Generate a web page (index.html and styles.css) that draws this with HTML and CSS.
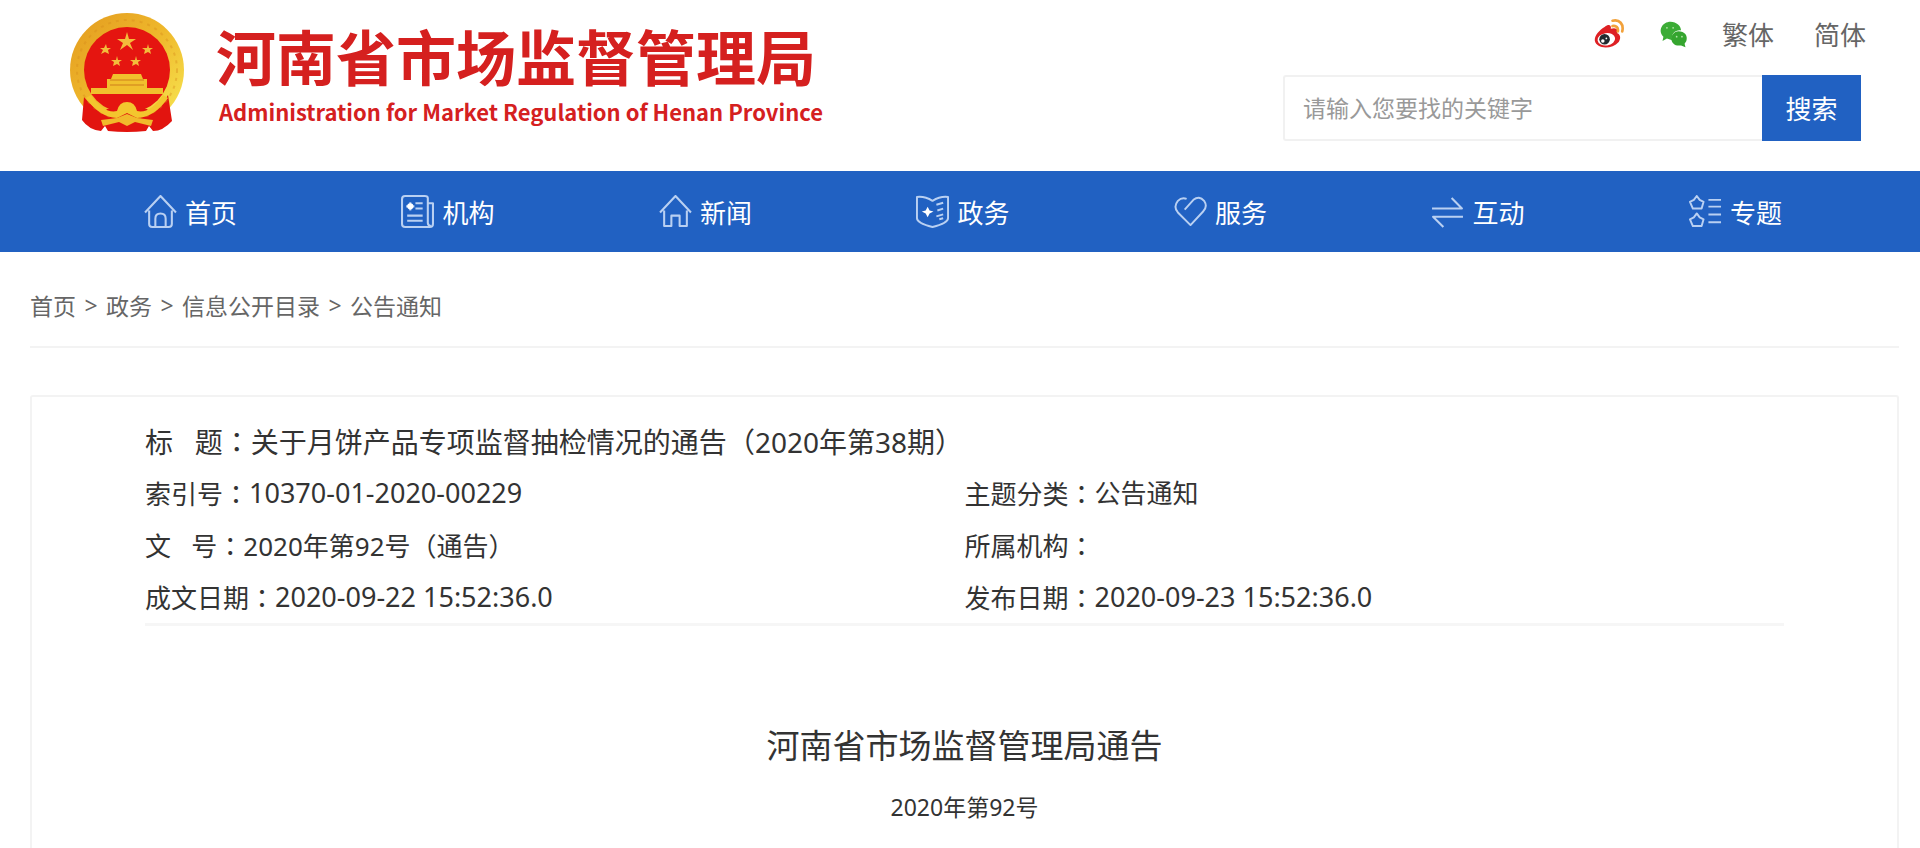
FILE: index.html
```html
<!DOCTYPE html>
<html lang="zh-CN">
<head>
<meta charset="utf-8">
<meta name="viewport" content="width=device-width, initial-scale=1">
<title>河南省市场监督管理局</title>
<link rel="stylesheet" href="styles.css">
</head>
<body>
<header class="header">
  <a class="brand" href="#">
    <svg class="emblem" viewBox="0 0 116 120" aria-hidden="true">
      <defs>
        <linearGradient id="gold" x1="0" y1="0" x2="1" y2="1">
          <stop offset="0" stop-color="#e39a1f"/><stop offset=".5" stop-color="#efb92c"/><stop offset="1" stop-color="#f8ea55"/>
        </linearGradient>
      </defs>
      <circle cx="58" cy="57" r="57" fill="url(#gold)"/>
      <path d="M10 92Q58 130 106 92L120 120H0Z" fill="#fff"/>
      <path d="M15 84Q24 96 35 99L38 96H78L81 99Q92 96 99 82L103 108Q94 118 84 118L80 113 77 118Q58 120 39 118L36 113 32 118Q20 117 13 107Z" fill="#e2140f"/>
      <circle cx="58" cy="57" r="50" fill="none" stroke="#d88d1c" stroke-width="2" stroke-dasharray="3 5" opacity=".4"/>
      <circle cx="58" cy="57" r="43" fill="#e51510"/>
      <path d="M44 61H72L74 66H78V75H94V81H22V75H38V66H42Z" fill="#f1c02d"/>
      <path d="M41 67H75M41 72H75" stroke="#cf7f1c" stroke-width="1"/>
      <path d="M22 82Q35 101 48 98 50 89 58 89T68 98Q81 101 94 82L99 85Q86 104 68 105L58 100 48 105Q30 104 17 85Z" fill="#f3c62e"/>
      <path d="M32 107 48 105 58 101 68 105 84 107 82 113 66 109 58 113 50 109 34 113Z" fill="#f1b92b"/>
      <g fill="#f3bd3b">
        <path d="M58 19 60 26H67L61 30 64 37 58 32 51 37 54 30 48 26H56Z"/>
        <path d="M37 31 38 35H42L39 37 40 41 36 39 32 41 34 37 31 35H35Z"/>
        <path d="M79 31 80 35H84L81 37 82 41 79 39 75 41 76 37 73 35H78Z"/>
        <path d="M48 43 49 47H53L50 49 51 53 48 51 44 53 45 49 42 47H47Z"/>
        <path d="M67 43 68 47H72L69 49 70 53 67 51 63 53 64 49 61 47H66Z"/>
      </g>
    </svg>
    <span class="brand-text">
      <span class="brand-cn">河南省市场监督管理局</span>
      <span class="brand-en" lang="en">Administration for Market Regulation of Henan Province</span>
    </span>
  </a>
  <div class="tools">
    <div class="links">
      <a href="#" aria-label="微博">
        <svg class="social" viewBox="0 0 34 34" aria-hidden="true">
          <path d="M12 9C17 5 20 7 19 11 25 9 28 12 26 16 31 18 30 23 28 26 20 35 3 34 1 25 0 20 5 13 12 9Z" fill="#de2024"/>
          <ellipse cx="14" cy="23" rx="10" ry="7" transform="rotate(-8 14 23)" fill="#fff"/>
          <circle cx="12" cy="23" r="6" fill="#202a2e"/><circle cx="10" cy="25" r="2" fill="#fff"/><circle cx="14" cy="22" r="1" fill="#fff"/>
          <path d="M21 2C29 0 34 6 32 14M21 8C25 7 28 10 27 14" fill="none" stroke="#f2a13a" stroke-width="3" stroke-linecap="round"/>
        </svg>
      </a>
      <a href="#" aria-label="微信">
        <svg class="social" viewBox="0 0 34 34" aria-hidden="true">
          <path d="M13 3C20 3 25 8 25 13 19 12 13 17 15 24L9 22 4 25 5 20C-2 13 4 3 13 3Z" fill="#3cac36"/>
          <path d="M22 14C29 14 33 19 31 25L29 28 30 32 25 30C18 31 14 27 14 22 14 18 18 14 22 14Z" fill="#35a52f"/>
          <g fill="#b4e2a8"><circle cx="9" cy="10" r="1"/><circle cx="16" cy="10" r="1"/><circle cx="20" cy="20" r="1"/><circle cx="26" cy="20" r="1"/></g>
        </svg>
      </a>
      <a class="lang" href="#">繁体</a>
      <a class="lang" href="#">简体</a>
    </div>
    <form class="search">
      <input type="text" aria-label="关键字" placeholder="请输入您要找的关键字">
      <button type="submit">搜索</button>
    </form>
  </div>
</header>

<nav class="nav">
  <a href="#"><svg viewBox="0 0 32 32" aria-hidden="true"><path d="M1 17 16 1 31 17M5 15V28Q5 31 8 31H24Q27 31 27 28V15M11 31V23Q11 18 16 18T21 23V31"/></svg>首页</a>
  <a href="#"><svg viewBox="0 0 32 32" aria-hidden="true"><path d="M26 27V3Q26 1 23 1H4Q1 1 1 4V28Q1 31 4 31H28Q31 31 31 28V8H27M26 27Q26 30 29 30M14 8H21M14 13H21M6 20H21M6 25H21M9 7V15M5 11H13"/><circle class="fill" cx="9" cy="11" r="3"/></svg>机构</a>
  <a href="#"><svg viewBox="0 0 32 32" aria-hidden="true"><path d="M1 17 16 1 31 17M5 15V30H12V20H20V30H27V15"/></svg>新闻</a>
  <a href="#"><svg viewBox="0 0 34 34" aria-hidden="true"><path d="M1 2Q9 1 17 6 25 1 33 2V24Q33 29 17 33 1 29 1 24ZM21 10 28 8M22 16 28 14M21 22 28 20M24 25 28 24"/><path class="fill" d="M12 12 14 16 18 17 14 19 12 23 10 19 6 17 10 16Z"/></svg>政务</a>
  <a href="#"><svg viewBox="0 0 34 34" aria-hidden="true"><path d="M11 15 20 5Q26 0 31 6 35 12 30 17L17 31 4 18Q-1 12 4 6 8 2 13 4"/></svg>服务</a>
  <a href="#"><svg viewBox="0 0 32 32" aria-hidden="true"><path d="M1 13H30L20 3M31 21H2L12 31"/></svg>互动</a>
  <a href="#"><svg viewBox="0 0 34 34" aria-hidden="true"><path d="M8 1 11 5 15 7 13 14H4L1 7 5 5ZM8 19 11 23 15 25 13 32H4L1 25 5 23ZM20 5H33M20 12H33M20 20H33M20 28H33"/></svg>专题</a>
</nav>

<main class="main">
  <nav class="crumbs" aria-label="当前位置">
    <a href="#">首页</a><span>&gt;</span><a href="#">政务</a><span>&gt;</span><a href="#">信息公开目录</a><span>&gt;</span><a href="#">公告通知</a>
  </nav>
  <article class="sheet">
    <dl class="info">
      <div class="wide"><dt>标&nbsp;&nbsp;&nbsp;题<i lang="zh-TW">：</i></dt><dd>关于月饼产品专项监督抽检情况的通告<i lang="zh-TW">（</i>2020年第38期<i lang="zh-TW">）</i></dd></div>
      <div><dt>索引号<i lang="zh-TW">：</i></dt><dd class="code">10370-01-2020-00229</dd></div>
      <div><dt>主题分类<i lang="zh-TW">：</i></dt><dd>公告通知</dd></div>
      <div><dt>文&nbsp;&nbsp;&nbsp;号<i lang="zh-TW">：</i></dt><dd>2020年第92号<i lang="zh-TW">（</i>通告<i lang="zh-TW">）</i></dd></div>
      <div><dt>所属机构<i lang="zh-TW">：</i></dt><dd></dd></div>
      <div><dt>成文日期<i lang="zh-TW">：</i></dt><dd class="code">2020-09-22 15:52:36.0</dd></div>
      <div><dt>发布日期<i lang="zh-TW">：</i></dt><dd class="code">2020-09-23 15:52:36.0</dd></div>
    </dl>
    <h1>河南省市场监督管理局通告</h1>
    <p class="number">2020年第92号</p>
  </article>
</main>
</body>
</html>
```
FILE: styles.css
```css
* { box-sizing: border-box; }

body {
  display: flex;
  flex-direction: column;
  min-height: 100vh;
  margin: 0;
  background: #fff;
  color: #333;
  font-family: "Noto Sans", "Noto Sans CJK SC", sans-serif;
  font-size: 26px;
}

a { color: inherit; text-decoration: none; }

.header {
  display: flex;
  justify-content: space-between;
  padding: 13px 54px 30px 69px;
}

.brand { display: flex; gap: 31px; color: #d5201f; }
.emblem { width: 116px; height: 120px; }
.brand-text { display: flex; flex-direction: column; padding-top: 2px; white-space: nowrap; }
.brand-cn {
  font: 700 60px/80px "Noto Sans CJK SC", sans-serif;
}
.brand-en {
  padding-left: 3px;
  font: 700 22px/32px "Noto Sans CJK SC", sans-serif;
}

.tools { display: flex; flex-direction: column; gap: 20px; width: 583px; }
.links { display: flex; justify-content: flex-end; align-items: center; height: 42px; color: #666; }
.social { display: block; width: 34px; height: 30px; margin-right: 31px; }
.lang + .lang { margin-left: 40px; }

.search { display: flex; height: 66px; margin-right: 5px; }
.search input {
  flex: 1;
  min-width: 0;
  padding: 0 18px;
  border: 2px solid #f1f1f1;
  border-right: 0;
  border-radius: 3px 0 0 3px;
  color: #333;
  font: inherit;
  font-size: 23px;
}
.search input::placeholder { color: #999; opacity: 1; }
.search button {
  width: 99px;
  padding: 0;
  border: 0;
  background: #2161c2;
  color: #fff;
  font: inherit;
}

.nav {
  display: flex;
  justify-content: space-between;
  align-items: center;
  height: 81px;
  padding: 0 138px 0 144px;
  background: #2161c2;
  color: #fff;
}
.nav a { display: flex; align-items: center; gap: 8px; }
.nav svg {
  width: 33px;
  height: 33px;
  fill: none;
  stroke: #b9d0f2;
  stroke-width: 2;
  stroke-linejoin: round;
}
.nav svg .fill { fill: #fff; stroke: none; }

.main { display: flex; flex: 1; flex-direction: column; padding: 0 21px 0 30px; }
.crumbs {
  display: flex;
  align-items: center;
  height: 96px;
  padding-top: 12px;
  border-bottom: 2px solid #f3f3f3;
  color: #666;
  font-size: 23px;
}
.crumbs span { width: 30px; text-align: center; }

.sheet {
  flex: 1;
  margin-top: 47px;
  padding: 18px 113px 0;
  border: 2px solid #f3f3f3;
  border-bottom: 0;
  border-radius: 3px 3px 0 0;
}
.info {
  display: grid;
  grid-template-columns: 1fr 1fr;
  grid-auto-rows: 52px;
  margin: 0;
  border-bottom: 3px solid #f6f6f6;
  line-height: 40px;
}
.info div { display: flex; align-items: center; white-space: nowrap; }
.info dd { margin: 0; }
.info i { font-family: "Noto Sans CJK TC", sans-serif; font-style: normal; }
.info .wide { grid-column: 1 / -1; font-size: 28px; }
.info .code { font-size: 27px; }

.sheet h1 {
  margin: 96px 0 0;
  font-size: 33px;
  font-weight: 400;
  line-height: 48px;
  text-align: center;
}
.number { margin: 20px 0 0; font-size: 23px; line-height: 34px; text-align: center; }
```
